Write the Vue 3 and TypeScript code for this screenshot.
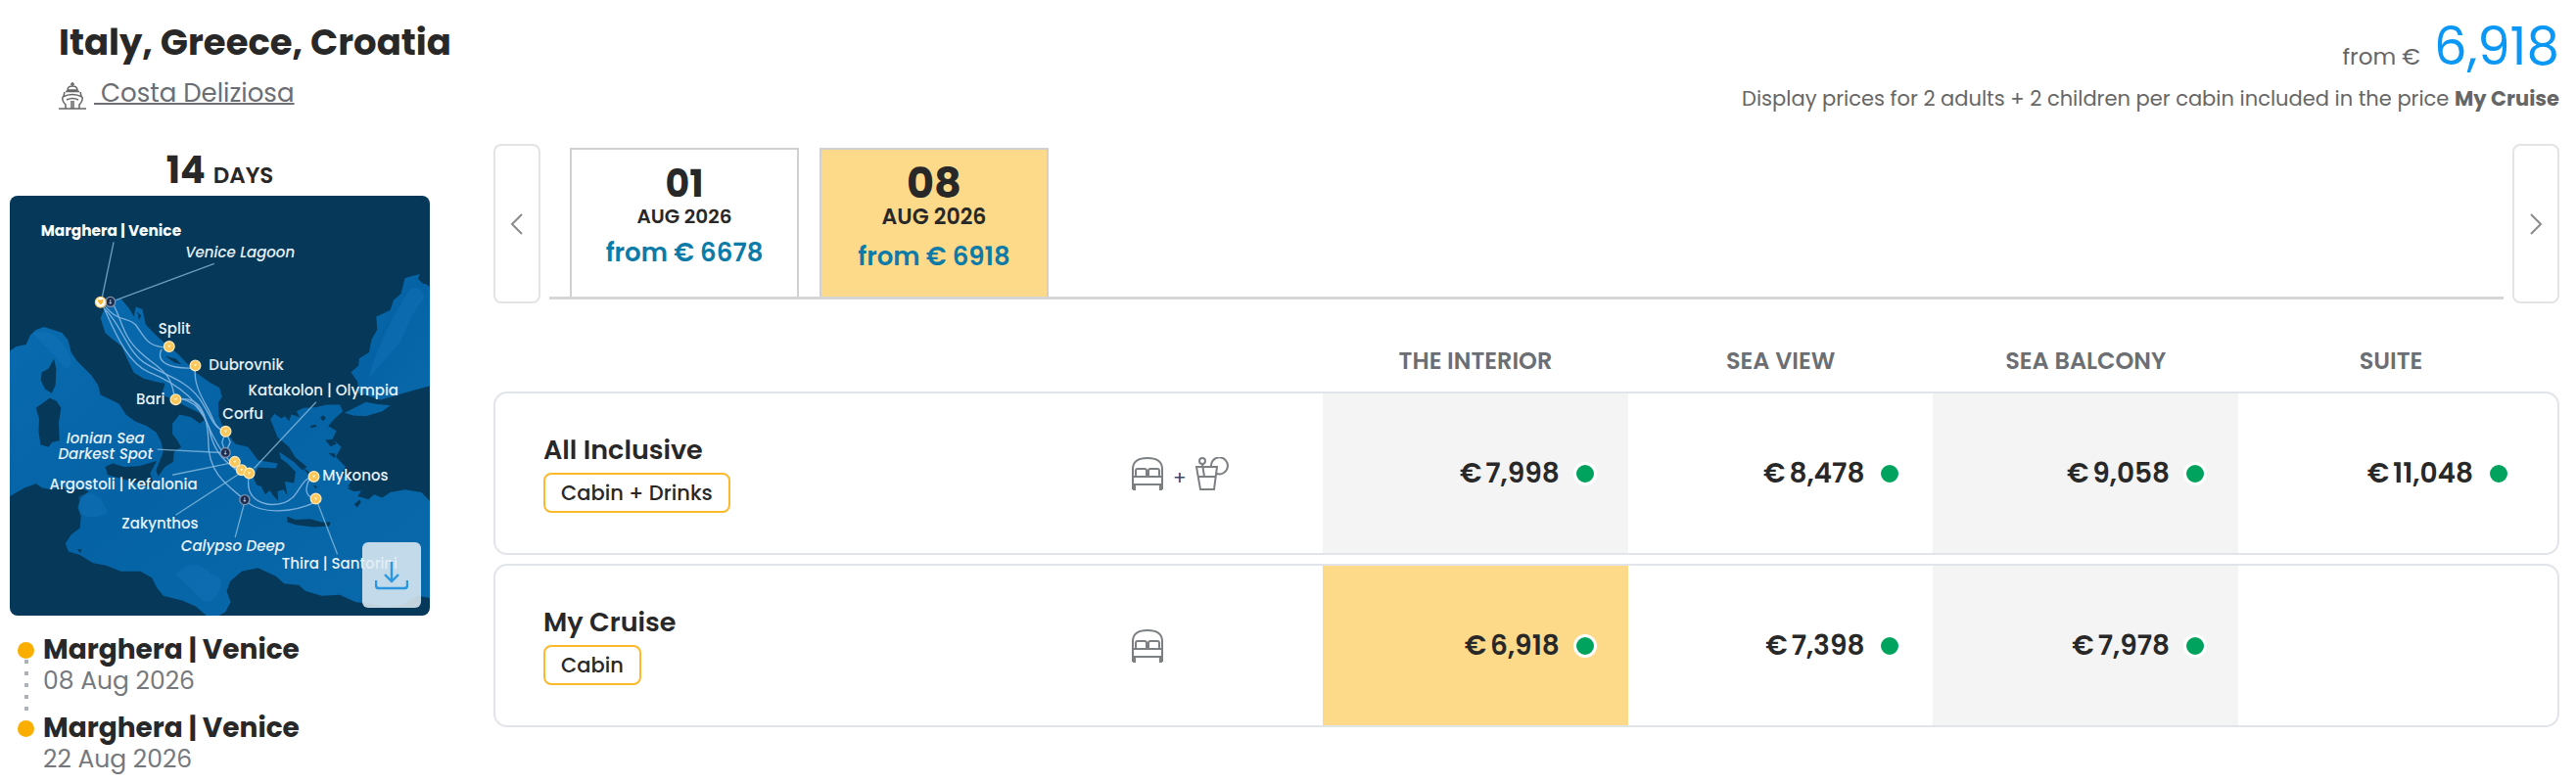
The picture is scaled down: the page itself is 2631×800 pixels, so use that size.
<script setup lang="ts">
import { ref } from 'vue'

interface Departure { day: string; month: string; price: string }
interface Stop { port: string; date: string }
interface Fare { name: string; badge: string; drinks: boolean; prices: (string | null)[] }
interface Label { text: string; x: number; y: number; kind: 'home' | 'port' | 'scenic' }

const departures: Departure[] = [
  { day: '01', month: 'AUG 2026', price: 'from € 6678' },
  { day: '08', month: 'AUG 2026', price: 'from € 6918' },
]
const selected = ref(1)

const stops: Stop[] = [
  { port: 'Marghera | Venice', date: '08 Aug 2026' },
  { port: 'Marghera | Venice', date: '22 Aug 2026' },
]

const cabins = ['THE INTERIOR', 'SEA VIEW', 'SEA BALCONY', 'SUITE']
const fares: Fare[] = [
  { name: 'All Inclusive', badge: 'Cabin + Drinks', drinks: true, prices: ['7,998', '8,478', '9,058', '11,048'] },
  { name: 'My Cruise', badge: 'Cabin', drinks: false, prices: ['6,918', '7,398', '7,978', null] },
]
const chosen = ref('1-0')

const labels: Label[] = [
  { text: 'Marghera | Venice', x: 340, y: 152, kind: 'home' },
  { text: 'Venice Lagoon', x: 735, y: 219, kind: 'scenic' },
  { text: 'Split', x: 534, y: 452, kind: 'port' },
  { text: 'Dubrovnik', x: 754, y: 564, kind: 'port' },
  { text: 'Bari', x: 461, y: 668, kind: 'port' },
  { text: 'Katakolon | Olympia', x: 990, y: 643, kind: 'port' },
  { text: 'Corfu', x: 744, y: 712, kind: 'port' },
  { text: 'Ionian Sea', x: 323, y: 788, kind: 'scenic' },
  { text: 'Darkest Spot', x: 323, y: 836, kind: 'scenic' },
  { text: 'Argostoli | Kefalonia', x: 378, y: 928, kind: 'port' },
  { text: 'Mykonos', x: 1088, y: 903, kind: 'port' },
  { text: 'Zakynthos', x: 490, y: 1049, kind: 'port' },
  { text: 'Calypso Deep', x: 713, y: 1117, kind: 'scenic' },
  { text: 'Thira | Santorini', x: 1040, y: 1171, kind: 'port' },
]
const ports = [[518, 492], [598, 550], [538, 654], [691, 752], [719, 845], [740, 870], [763, 880], [961, 890], [967, 958]]
const scenic = [[338, 355], [690, 817], [749, 961]]
</script>

<template>
  <article class="cruise">
    <header class="head">
      <div>
        <h1 class="title">Italy, Greece, Croatia</h1>
        <div class="ship">
          <svg class="ship-icon" viewBox="0 0 28 28" aria-hidden="true">
            <path d="M14 0v4M12 2h4M9 8q0-4 5-4t5 4zM7 9.500h14M6 10l-1 4M22 10l1 4M4 15q10-5 20 0M4 15q-1 4 3 8v4M24 15q1 4-3 8v4M8 18q6-3 12 0M13 19v8M15 19v8M0 27h28" />
          </svg>
          <a href="#ship">&nbsp;Costa Deliziosa</a>
        </div>
      </div>
      <div class="summary">
        <p class="total"><span>from €</span> <strong>6,918</strong></p>
        <p class="note">Display prices for 2 adults + 2 children per cabin included in the price <b>My Cruise</b></p>
      </div>
    </header>

    <div class="body">
      <aside class="side">
        <p class="days">14 <span>DAYS</span></p>
        <div class="map">
          <svg viewBox="30 30 1286 1286" role="img" aria-label="Cruise route map">
            <defs>
              <linearGradient id="sea" x1="0" y1="0" x2="1" y2="1">
                <stop offset="0" stop-color="#0a6bb0" />
                <stop offset=".45" stop-color="#0563a5" />
                <stop offset="1" stop-color="#0869ab" />
              </linearGradient>
            </defs>
            <path class="land" d="M30 30h1286v1286H30z" />
            <path fill="url(#sea)" d="M30 505L50 492L80 486L92 458L110 441L135 432L160 440L190 450L208 472L218 510L235 535L280 580L300 610L308 640L340 655L365 668L385 700L415 722L450 735L478 755L492 780L500 815L490 840L478 870L484 890L505 860L530 845L533 815L555 800L540 775L528 760L528 728L550 700L585 708L612 728L628 715L610 695L570 675L520 650L495 640L505 605L480 600L440 590L410 572L392 535L372 490L345 470L322 450L308 405L318 380L345 350L370 345L395 375L410 400L416 370L436 378L446 425L485 465L545 515L600 572L640 600L672 618L680 645L668 665L670 705L685 745L720 790L760 800L790 840L850 850L845 865L790 862L775 890L785 915L800 920L812 945L826 932L838 950L852 965L850 935L868 930L880 948L872 905L900 910L905 875L880 850L860 835L855 815L900 845L925 870L940 860L905 832L885 800L850 770L828 715L840 698L862 712L872 705L885 720L892 700L918 708L908 690L930 680L965 678L1000 670L1040 670L1050 690L1025 712L1005 735L1030 750L1018 775L1045 800L1028 830L1058 860L1042 885L1078 900L1065 920L1108 930L1095 950L1128 960L1145 945L1170 955L1195 938L1240 930L1290 938L1316 965V1262L1280 1255L1230 1282L1180 1290L1130 1278L1090 1275L1040 1252L985 1255L935 1240L915 1222L870 1218L845 1195L790 1170L740 1180L705 1210L694 1240L706 1275L690 1305L670 1316H632L600 1288L560 1270L500 1255L480 1230L465 1200L430 1180L370 1180L325 1162L285 1155L245 1130L210 1120L200 1095L218 1068L245 1048L248 1010L238 985L248 955L272 935L245 925L205 935L190 915L160 930L130 925L110 912L75 925L30 950z" />
            <path fill="url(#sea)" d="M1316 300L1296 300L1280 285L1285 270L1240 282L1228 330L1205 350L1195 380L1170 392L1152 400L1155 440L1138 470L1130 510L1100 528L1098 550L1075 570L1095 600L1098 635L1120 640L1165 655L1200 645L1245 632L1316 612zM1055 695L1085 680L1120 662L1150 668L1195 672L1170 690L1120 705L1080 703z" />
            <path fill="#1a7ac0" opacity=".3" d="M540 1190Q590 1130 650 1190Q700 1200 660 1260Q630 1290 600 1250zM1240 340Q1270 280 1300 340Q1260 390 1225 480Q1170 540 1130 590Q1150 490 1240 340zM240 950Q300 920 330 1000Q280 1030 245 1000zM100 450Q150 430 190 480Q240 550 200 560Q150 500 100 450z" />
            <path class="land" d="M165 530L172 560L170 610L158 635L138 622L125 595L128 570L148 560zM110 680L152 650L172 658L187 680L180 725L182 780L160 785L148 800L124 792L118 750L120 715zM322 860L345 850L380 860L425 858L480 842L460 880L468 905L462 925L430 915L385 900L330 885zM878 1012L905 1022L950 1020L985 1030L1012 1030L1008 1042L960 1045L905 1038L880 1030zM950 735l16-4l4 6l-18 4zM980 710l10-8l8 10l-10 8zM996 778l24-2l10 14l-18 8zM1005 818l22 2l-2 14zM925 860l22 16l-4 6zM1062 925l30-4l20 12l-30 2zM1085 975l16-14l4 8l-12 16zM958 915l14 6l-6 6zM505 520l34 10l16 16l-22-6zM420 385l12 12l-6 14zM236 1112l14 2l-4 10zM1280 285l36 10v14z" />
            <g class="route">
              <path d="M312 360C345 430 385 540 455 570C530 600 610 650 640 740C650 800 675 830 700 850L740 885" />
              <path d="M315 360C360 420 390 400 415 425C445 465 450 495 518 495" />
              <path d="M495 500C475 540 520 562 598 557C590 620 635 670 650 710Q665 750 691 752" />
              <path d="M345 360C370 400 375 460 425 505C480 560 525 560 535 654" />
              <path d="M538 654C615 640 635 700 638 780C635 880 700 920 749 961C790 1005 890 1005 967 968" />
              <path d="M318 375C370 420 385 500 440 540C500 580 565 590 610 650C650 710 650 740 691 752" />
              <path d="M540 650C620 655 630 730 660 780Q680 820 740 885M691 752L705 785L690 817L680 785zM763 885C745 970 820 985 870 970C915 955 920 900 950 893Q920 950 967 958" />
            </g>
            <path class="leader" d="M348 172L313 340M656 238L355 350M968 662L778 865M482 807L680 817M528 885L710 848M538 1008L735 880M720 1076L747 975M972 970L1033 1128" />
            <g v-for="(p, i) in scenic" :key="'s' + i">
              <circle class="spot" :cx="p[0]" :cy="p[1]" r="15" />
              <path class="spot-mark" :d="`M${p[0]} ${p[1] - 7}v14m-4-4h8`" />
            </g>
            <g v-for="(p, i) in ports" :key="'p' + i">
              <circle class="pin" :cx="p[0]" :cy="p[1]" r="16" />
              <path class="pin-mark" :d="`M${p[0] - 5} ${p[1] - 3}l5 7l5-9z`" />
            </g>
            <circle class="pin home-pin" cx="308" cy="356" r="16" />
            <path fill="#f9b233" d="M299 350q4-5 9 0q5-5 9 0q0 7-9 14q-9-7-9-14z" />
            <text v-for="l in labels" :key="l.text" :x="l.x" :y="l.y" :class="['label', l.kind]">{{ l.text }}</text>
          </svg>
          <button class="download" type="button" aria-label="Download map">
            <svg viewBox="0 0 34 30" aria-hidden="true">
              <path d="M17 1v19M10 14l7 7l7-7M1 20v5q0 3 3 3h26q3 0 3-3v-5" />
            </svg>
          </button>
        </div>
        <ol class="stops">
          <li v-for="s in stops" :key="s.date">
            <strong>{{ s.port }}</strong>
            <span>{{ s.date }}</span>
          </li>
        </ol>
      </aside>

      <section class="offers">
        <div class="carousel">
          <button class="arrow" type="button" aria-label="Previous dates">
            <svg viewBox="0 0 14 22" aria-hidden="true"><path d="M12 1L2 11L12 21" /></svg>
          </button>
          <div class="strip" role="tablist">
            <button
              v-for="(d, i) in departures"
              :key="d.day"
              type="button"
              role="tab"
              :aria-selected="selected === i"
              :class="['date', { active: selected === i }]"
              @click="selected = i"
            >
              <span class="day">{{ d.day }}</span>
              <span class="month">{{ d.month }}</span>
              <span class="from">{{ d.price }}</span>
            </button>
          </div>
          <button class="arrow" type="button" aria-label="Next dates">
            <svg viewBox="0 0 14 22" aria-hidden="true"><path d="M2 1L12 11L2 21" /></svg>
          </button>
        </div>

        <table class="fares">
          <colgroup>
            <col class="c-name"><col class="c-icons"><col class="c-price"><col class="c-price"><col class="c-price"><col>
          </colgroup>
          <thead>
            <tr>
              <td></td>
              <td></td>
              <th v-for="c in cabins" :key="c" scope="col">{{ c }}</th>
            </tr>
          </thead>
          <tbody>
            <tr v-for="(f, r) in fares" :key="f.name">
              <th scope="row">
                <span class="fare-name">{{ f.name }}</span>
                <span class="badge">{{ f.badge }}</span>
              </th>
              <td>
                <span class="icons">
                  <svg viewBox="0 0 34 34" aria-hidden="true">
                    <path d="M2 33V11Q3 1 17 1Q31 1 32 11V33M2 20H32M2 28H32M2 33H4V29M32 33H30V29M5 20V14Q5 12 7 12H14Q16 12 16 14V20M18 20V14Q18 12 20 12H27Q29 12 29 14V20" />
                  </svg>
                  <template v-if="f.drinks">
                    <span class="plus">+</span>
                    <svg viewBox="0 0 34 34" aria-hidden="true">
                      <path d="M1 10H22L19 33H5ZM3 20H21M7 7L9 20M16 10A8.500 8.500 0 1 1 22 17" />
                      <circle cx="7" cy="4" r="3" />
                    </svg>
                  </template>
                </span>
              </td>
              <td
                v-for="(p, c) in f.prices"
                :key="c"
                :class="{ shaded: c % 2 === 0, chosen: chosen === r + '-' + c }"
              >
                <button v-if="p" class="price" type="button" @click="chosen = r + '-' + c">
                  <span>€</span><span>{{ p }}</span><i class="dot"></i>
                </button>
              </td>
            </tr>
          </tbody>
        </table>
      </section>
    </div>
  </article>
</template>

<style>
body {
  margin: 0;
  background: #fff;
}
</style>

<style scoped>
.cruise {
  padding: 0 17px 0 10px;
  font-family: Poppins, Inter, "Open Sans", sans-serif;
  color: #282828;
  font-size: 26px;
}
.cruise * { box-sizing: border-box; }
h1, p, ol { margin: 0; padding: 0; }
button {
  font: inherit;
  color: inherit;
  background: none;
  border: 0;
  padding: 0;
  cursor: pointer;
}
svg { fill: none; }

.head {
  display: flex;
  justify-content: space-between;
  min-height: 147px;
  padding: 20px 0 0 50px;
}
.title {
  font-size: 37px;
  line-height: 46px;
  font-weight: 700;
}
.ship {
  display: flex;
  align-items: center;
  gap: 8px;
  margin-top: 12px;
  line-height: 34px;
}
.ship a {
  color: #6b6e72;
  text-decoration: underline;
  text-decoration-thickness: 2px;
}
.ship-icon {
  width: 28px;
  height: 28px;
  stroke: #666;
  stroke-width: 1.5;
  margin-top: 6px;
}
.summary { text-align: right; color: #666; }
.total {
  line-height: 56px;
  font-size: 53px;
}
.total span {
  font-size: 23px;
  line-height: 30px;
}
.total strong {
  color: #0a97f5;
  font-weight: 400;
}
.note {
  margin-top: 12px;
  font-size: 21px;
  line-height: 26px;
}

.body {
  display: flex;
  gap: 65px;
  align-items: flex-start;
}
.side { flex: 0 0 429px; }
.days {
  text-align: center;
  line-height: 53px;
  font-size: 38px;
  font-weight: 700;
}
.days span {
  font-size: 23px;
  line-height: 30px;
  font-weight: 600;
}
.map {
  position: relative;
  border-radius: 8px;
  overflow: hidden;
}
.map > svg { display: block; width: 100%; }
.land { fill: #053859; }
.route { stroke: #8fbde6; stroke-width: 4; opacity: .85; }
.leader { stroke: #8fc0e0; stroke-width: 4; opacity: .75; }
.pin { fill: #fbc75a; stroke: #fde9b8; stroke-width: 4; }
.pin-mark { fill: #fff1c9; }
.home-pin { fill: #fff; stroke: #fbd27a; }
.spot { fill: #1c2c50; stroke: #7f93ad; stroke-width: 4; }
.spot-mark { stroke: #a9b4c8; stroke-width: 3; }
.label {
  fill: #e6f0f7;
  font-size: 45px;
  text-anchor: middle;
  font-weight: 500;
}
.label.home { fill: #fff; font-size: 46px; font-weight: 700; }
.label.scenic { font-style: italic; }
.download {
  position: absolute;
  right: 9px;
  bottom: 8px;
  width: 60px;
  height: 67px;
  border-radius: 6px;
  background: rgba(225, 236, 243, .86);
  display: grid;
  place-items: center;
}
.download svg {
  width: 34px;
  height: 30px;
  stroke: #2b97e0;
  stroke-width: 2.4;
}

.stops {
  list-style: none;
  margin-top: 19px;
  padding-left: 8px;
}
.stops li {
  position: relative;
  padding: 0 0 16px 26px;
  display: flex;
  flex-direction: column;
  line-height: 32px;
}
.stops li::before {
  content: "";
  position: absolute;
  left: 0;
  top: 8px;
  width: 17px;
  height: 17px;
  border-radius: 50%;
  background: #f9ae00;
}
.stops li:not(:last-child)::after {
  content: "";
  position: absolute;
  left: 7px;
  top: 26px;
  height: 60px;
  width: 4px;
  background: repeating-linear-gradient(#adb2b8 0 4px, transparent 4px 12px);
}
.stops strong { font-size: 28px; font-weight: 700; }
.stops span { font-size: 25px; color: #75797e; }

.offers { flex: 1; min-width: 0; }
.carousel {
  display: flex;
  gap: 9px;
}
.arrow {
  flex: 0 0 48px;
  height: 163px;
  border: 2px solid #e4e4e4;
  border-radius: 8px;
  display: grid;
  place-items: center;
}
.arrow svg {
  width: 14px;
  height: 22px;
  stroke: #8a8a8a;
  stroke-width: 2;
}
.strip {
  flex: 1;
  margin: 4px 0;
  padding-left: 21px;
  border-bottom: 3px solid #d6d6d6;
  display: flex;
  gap: 21px;
}
.date {
  width: 234px;
  border: 2px solid #d0d0d0;
  border-bottom: 0;
  padding-top: 14px;
  display: flex;
  flex-direction: column;
  align-items: center;
}
.day { font-size: 38px; line-height: 42px; font-weight: 700; }
.month { font-size: 20px; line-height: 24px; font-weight: 600; }
.from { font-size: 26px; line-height: 34px; font-weight: 600; color: #0d7aa8; margin-top: 8px; }
.date.active { background: #fcda89; padding-top: 12px; }
.active .day { font-size: 43px; line-height: 44px; }
.active .month { font-size: 22px; line-height: 26px; }
.active .from { margin-top: 10px; }

.fares {
  width: 100%;
  margin-top: 28px;
  table-layout: fixed;
  border-spacing: 0 9px;
}
.fares td, .fares th { padding: 0; }
.c-name { width: 30.85%; }
.c-icons { width: 9.3%; }
.c-price { width: 14.77%; }
thead th {
  font-size: 24px;
  line-height: 44px;
  font-weight: 600;
  color: #6b6f74;
}
.fares thead th:last-child { padding-right: 16px; }
tbody th, tbody td {
  height: 167px;
  border: solid #e1e4e9;
  border-width: 2px 0;
  vertical-align: middle;
}
.fares tbody th {
  border-left-width: 2px;
  border-radius: 14px 0 0 14px;
  padding-left: 49px;
  text-align: left;
}
.fares tbody td:last-child {
  border-right-width: 2px;
  border-radius: 0 14px 14px 0;
  padding-right: 16px;
}
.fare-name {
  display: block;
  margin-bottom: 6px;
  font-size: 27px;
  line-height: 34px;
  font-weight: 600;
}
.badge {
  display: inline-block;
  vertical-align: top;
  border: 2px solid #fdb92c;
  border-radius: 8px;
  padding: 0 16px;
  font-size: 21px;
  line-height: 37px;
  font-weight: 500;
}
.icons {
  display: flex;
  align-items: center;
  gap: 9px;
}
.icons svg {
  width: 34px;
  height: 34px;
  stroke: #7d8083;
  stroke-width: 2;
}
.plus { font-size: 20px; line-height: 24px; padding-top: 8px; color: #3b4a6b; }
.shaded { background: #f4f4f4; background-clip: padding-box; }
.chosen { background: #fcda89; background-clip: padding-box; }
.price {
  display: flex;
  align-items: center;
  justify-content: flex-end;
  width: 100%;
  gap: 4px;
  padding-right: 32px;
  font-size: 28px;
  font-weight: 600;
}
.dot {
  width: 24px;
  height: 24px;
  margin-left: 10px;
  border: 3px solid #fff;
  border-radius: 50%;
  background: #00a35e;
}
</style>
